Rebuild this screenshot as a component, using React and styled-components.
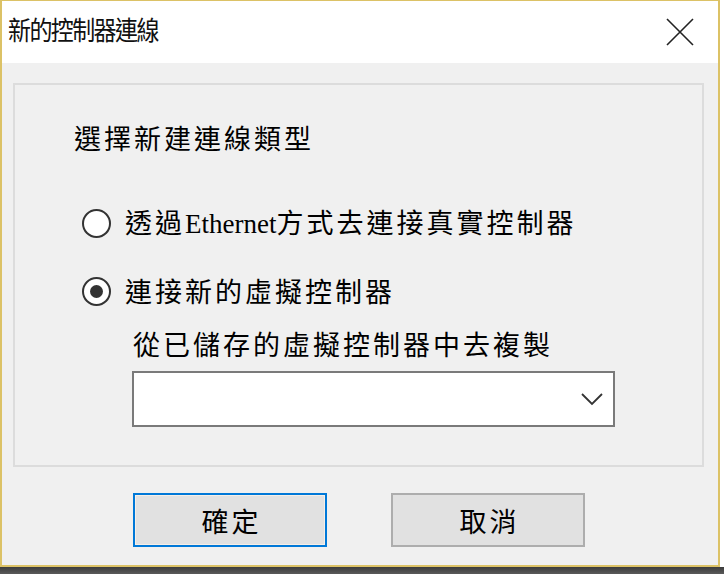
import React, { useState } from "react";
import styled, { createGlobalStyle } from "styled-components";

const GlobalStyle = createGlobalStyle`
    html, body {
        margin: 0;
        padding: 0;
        background: #ffffff;
    }
    body {
        font-family: "Noto Sans CJK TC", "Noto Sans", sans-serif;
        color: #000;
    }
`;

const Page = styled.div`
    width: 724px;
    height: 574px;
    display: flex;
    flex-direction: column;
    overflow: hidden;
`;

const Window = styled.div`
    width: 720px;
    height: 567px;
    box-sizing: border-box;
    border: 2px solid #dcc266;
    border-top-width: 1px;
    display: flex;
    flex-direction: column;
    background: #f0f0f0;
`;

const Shadow = styled.div`
    height: 7px;
    width: 724px;
    background: linear-gradient(#3c3c3c, #5a5a5a);
`;

const TitleBar = styled.div`
    height: 62px;
    box-sizing: border-box;
    background: #fff;
    display: flex;
    align-items: center;
    justify-content: space-between;
    padding: 0 24px 6px 6px;
    flex-shrink: 0;
`;

const Title = styled.span`
    font-size: 23px;
    letter-spacing: -1.6px;
    line-height: 28px;
    color: #111;
    transform: scaleY(1.15);
    transform-origin: left center;
`;

const CloseButton = styled.button`
    width: 28px;
    height: 28px;
    padding: 0;
    border: 0;
    background: transparent;
    display: flex;
    align-items: center;
    justify-content: center;
    margin-top: 6px;
`;

const Body = styled.div`
    flex: 1;
    display: flex;
    flex-direction: column;
    padding: 20px 14px 0 11px;
`;

const Group = styled.fieldset`
    margin: 0;
    height: 384px;
    box-sizing: border-box;
    border: 2px solid #dcdcdc;
    padding: 38px 0 0 0;
    display: flex;
    flex-direction: column;
`;

const Text = styled.span`
    font-size: 27px;
    line-height: 30px;
    letter-spacing: 3px;
    white-space: nowrap;
`;

const Heading = styled(Text)`
    margin-left: 59px;
`;

const Latin = styled.span`
    font-family: "Liberation Serif", serif;
    letter-spacing: 0;
`;

const RadioRow = styled.label`
    display: flex;
    align-items: center;
    height: 32px;
    margin-left: 67px;
    margin-top: ${(p) => p.$gap}px;
    gap: 14px;
    cursor: default;
`;

const RadioCircle = styled.span`
    width: 29px;
    height: 29px;
    box-sizing: border-box;
    border: 2.5px solid #333;
    border-radius: 50%;
    background: #fff;
    display: flex;
    align-items: center;
    justify-content: center;
    flex-shrink: 0;
    &::after {
        content: "";
        width: 13px;
        height: 13px;
        border-radius: 50%;
        background: ${(p) => (p.$checked ? "#333" : "transparent")};
    }
`;

const SubLabel = styled(Text)`
    margin: 22px 0 0 118px;
`;

const Combo = styled.div`
    margin: 12px 0 0 117px;
    width: 483px;
    height: 56px;
    box-sizing: border-box;
    border: 2px solid #7a7a7a;
    background: #fff;
    display: flex;
    align-items: center;
    justify-content: flex-end;
    padding-right: 10px;
`;

const ButtonRow = styled.div`
    display: flex;
    gap: 64px;
    margin: 26px 0 0 120px;
`;

const DialogButton = styled.button`
    width: 194px;
    height: 54px;
    box-sizing: border-box;
    background: #e1e1e1;
    border: 2px solid ${(p) => (p.$primary ? "#0078d7" : "#adadad")};
    box-shadow: ${(p) => (p.$primary ? "inset 0 0 0 1px #f6efe8" : "none")};
    font-family: "Noto Sans CJK TC", "Noto Sans", sans-serif;
    font-size: 27px;
    letter-spacing: 3px;
    color: #000;
    padding: 0 0 0 3px;
    display: flex;
    align-items: center;
    justify-content: center;
`;

const CloseIcon = () => (
    <svg width="28" height="28" viewBox="0 0 28 28">
        <path d="M1 1 L27 27 M27 1 L1 27" stroke="#222" strokeWidth="1.6" fill="none" />
    </svg>
);

const Chevron = () => (
    <svg width="22" height="14" viewBox="0 0 22 14">
        <path d="M1 2 L11 12 L21 2" stroke="#333" strokeWidth="1.8" fill="none" />
    </svg>
);

const App = () => {
    const [mode, setMode] = useState("virtual");

    return (
        <Page>
            <GlobalStyle />
            <Window>
                <TitleBar>
                    <Title>新的控制器連線</Title>
                    <CloseButton>
                        <CloseIcon />
                    </CloseButton>
                </TitleBar>
                <Body>
                    <Group>
                        <Heading>選擇新建連線類型</Heading>
                        <RadioRow $gap={54} onClick={() => setMode("ethernet")}>
                            <RadioCircle $checked={mode === "ethernet"} />
                            <Text>
                                透過<Latin>Ethernet</Latin>方式去連接真實控制器
                            </Text>
                        </RadioRow>
                        <RadioRow $gap={36} onClick={() => setMode("virtual")}>
                            <RadioCircle $checked={mode === "virtual"} />
                            <Text>連接新的虛擬控制器</Text>
                        </RadioRow>
                        <SubLabel>從已儲存的虛擬控制器中去複製</SubLabel>
                        <Combo>
                            <Chevron />
                        </Combo>
                    </Group>
                    <ButtonRow>
                        <DialogButton $primary>確定</DialogButton>
                        <DialogButton>取消</DialogButton>
                    </ButtonRow>
                </Body>
            </Window>
            <Shadow />
        </Page>
    );
};

export default App;
